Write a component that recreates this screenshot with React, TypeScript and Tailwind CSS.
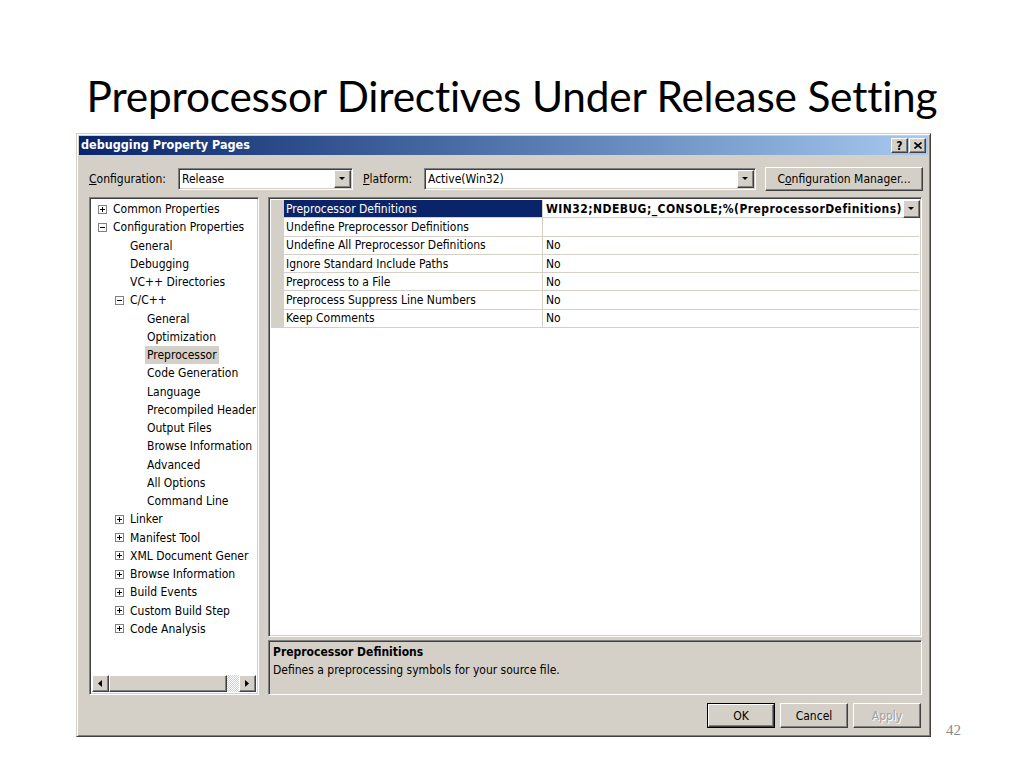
import React from 'react';

type TreeItem = { label: string; level: number; box?: '+' | '-'; selected?: boolean };

const tree: TreeItem[] = [
  { label: 'Common Properties', level: 0, box: '+' },
  { label: 'Configuration Properties', level: 0, box: '-' },
  { label: 'General', level: 1 },
  { label: 'Debugging', level: 1 },
  { label: 'VC++ Directories', level: 1 },
  { label: 'C/C++', level: 1, box: '-' },
  { label: 'General', level: 2 },
  { label: 'Optimization', level: 2 },
  { label: 'Preprocessor', level: 2, selected: true },
  { label: 'Code Generation', level: 2 },
  { label: 'Language', level: 2 },
  { label: 'Precompiled Header', level: 2 },
  { label: 'Output Files', level: 2 },
  { label: 'Browse Information', level: 2 },
  { label: 'Advanced', level: 2 },
  { label: 'All Options', level: 2 },
  { label: 'Command Line', level: 2 },
  { label: 'Linker', level: 1, box: '+' },
  { label: 'Manifest Tool', level: 1, box: '+' },
  { label: 'XML Document Gener', level: 1, box: '+' },
  { label: 'Browse Information', level: 1, box: '+' },
  { label: 'Build Events', level: 1, box: '+' },
  { label: 'Custom Build Step', level: 1, box: '+' },
  { label: 'Code Analysis', level: 1, box: '+' },
];

const props = [
  ['Preprocessor Definitions', 'WIN32;NDEBUG;_CONSOLE;%(PreprocessorDefinitions)'],
  ['Undefine Preprocessor Definitions', ''],
  ['Undefine All Preprocessor Definitions', 'No'],
  ['Ignore Standard Include Paths', 'No'],
  ['Preprocess to a File', 'No'],
  ['Preprocess Suppress Line Numbers', 'No'],
  ['Keep Comments', 'No'],
];

const ui = "font-['DejaVu_Sans_Condensed','DejaVu_Sans',sans-serif] font-stretch-condensed text-[12px] text-black";
const raised = 'border border-t-white border-l-white border-b-[#404040] border-r-[#404040] shadow-[inset_-1px_-1px_0_#808080] bg-[#d4d0c8]';
const sunken = 'border border-t-[#808080] border-l-[#808080] border-b-white border-r-white shadow-[inset_1px_1px_0_#404040,inset_-1px_-1px_0_#d4d0c8]';

function Arrow({ dir }: { dir: 'down' | 'left' | 'right' }) {
  const pts = dir === 'down' ? '0,0 6,0 3,3' : dir === 'left' ? '4,0 4,7 0,3.5' : '0,0 0,7 4,3.5';
  const w = dir === 'down' ? 7 : 5;
  const h = dir === 'down' ? 4 : 8;
  return (
    <svg width={w} height={h} viewBox={`0 0 ${w} ${h}`}>
      <polygon points={pts} fill="#000" />
    </svg>
  );
}

function DropBtn() {
  return (
    <div className={`${raised} w-[17px] h-[18px] flex items-center justify-center shrink-0`}>
      <Arrow dir="down" />
    </div>
  );
}

function Combo({ value, w }: { value: string; w: string }) {
  return (
    <div className={`${sunken} ${w} h-[22px] bg-white flex items-center pl-[3px] pr-[1px]`}>
      <span className="flex-1">{value}</span>
      <DropBtn />
    </div>
  );
}

function Box({ sign }: { sign: '+' | '-' }) {
  return (
    <svg width="9" height="9" viewBox="0 0 9 9" className="shrink-0">
      <rect x="0.5" y="0.5" width="8" height="8" fill="#fff" stroke="#808080" />
      <line x1="2" y1="4.5" x2="7" y2="4.5" stroke="#000" />
      {sign === '+' && <line x1="4.5" y1="2" x2="4.5" y2="7" stroke="#000" />}
    </svg>
  );
}

export default function App() {
  return (
    <div className="w-[1024px] h-[768px] bg-white flex flex-col overflow-hidden">
      <h1 className="font-['Lato',sans-serif] text-[42.4px] leading-none text-black text-center pt-[75px] h-[133px] tracking-[-0.2px]">
        Preprocessor Directives Under Release Setting
      </h1>

      <div className="flex items-end">
        <div className={`${ui} ml-[76px] w-[855px] h-[604px] bg-[#d4d0c8] border border-t-[#d4d0c8] border-l-[#d4d0c8] border-b-[#404040] border-r-[#404040] shadow-[inset_1px_1px_0_#fff,inset_-1px_-1px_0_#808080] p-[2px] flex flex-col`}>
          {/* title bar */}
          <div className="h-[19px] bg-gradient-to-r from-[#0a246a] to-[#a6caf0] flex items-center pl-[2px] pr-[2px]">
            <span className="flex-1 text-white font-bold text-[12.5px]">debugging Property Pages</span>
            <div className={`${raised} w-[17px] h-[15px] flex items-center justify-center font-bold text-[12px] leading-none`}>?</div>
            <div className={`${raised} w-[17px] h-[15px] ml-[1px] flex items-center justify-center`}>
              <svg width="8" height="7" viewBox="0 0 8 7">
                <path d="M0.5 0.5 L7.5 6.5 M7.5 0.5 L0.5 6.5" stroke="#000" strokeWidth="1.6" />
              </svg>
            </div>
          </div>

          {/* config row */}
          <div className="flex items-center h-[24px] mt-[12px] pl-[10px]">
            <span className="w-[89px]"><span className="underline">C</span>onfiguration:</span>
            <Combo value="Release" w="w-[175px]" />
            <span className="ml-[10px] w-[61px]"><span className="underline">P</span>latform:</span>
            <Combo value="Active(Win32)" w="w-[332px]" />
            <div className={`${raised} ml-[9px] w-[158px] h-[24px] flex items-center justify-center`}>
              C<span className="underline">o</span>nfiguration Manager...
            </div>
          </div>

          {/* main area */}
          <div className="flex mt-[6px] pl-[10px] h-[498px]">
            {/* tree */}
            <div className={`${sunken} w-[170px] h-full bg-white flex flex-col p-[2px]`}>
              <div className="flex-1 overflow-hidden">
                {tree.map((t, i) => (
                  <div key={i} className="h-[18.25px] flex items-center whitespace-nowrap" style={{ paddingLeft: 6 + t.level * 17 }}>
                    <div className="w-[15px] flex shrink-0">{t.box && <Box sign={t.box} />}</div>
                    <span className={t.selected ? 'bg-[#d4d0c8] px-[2px] -mx-[2px]' : ''}>{t.label}</span>
                  </div>
                ))}
              </div>
              <div className="h-[17px] flex">
                <div className={`${raised} w-[17px] h-full flex items-center justify-center`}><Arrow dir="left" /></div>
                <div className={`${raised} w-[118px] h-full`} />
                <div className="flex-1 h-full bg-[repeating-conic-gradient(#d4d0c8_0_25%,#fff_0_50%)] bg-[length:2px_2px]" />
                <div className={`${raised} w-[17px] h-full flex items-center justify-center`}><Arrow dir="right" /></div>
              </div>
            </div>

            {/* right column */}
            <div className="ml-[9px] w-[654px] flex flex-col">
              <div className={`${sunken} h-[440px] bg-white flex p-[2px]`}>
                <div className="w-[13px] bg-[#d4d0c8] h-[128px]" />
                <div className="flex-1 flex flex-col">
                  {props.map(([name, val], i) => (
                    <div key={i} className="h-[18.3px] flex border-b border-[#d4d0c8]">
                      <div className={`w-[259px] pl-[2px] flex items-center border-r border-[#d4d0c8] ${i === 0 ? 'bg-[#0a246a] text-white' : ''}`}>{name}</div>
                      <div className={`flex-1 flex items-center pl-[3px] ${i === 0 ? 'font-bold tracking-[0.45px]' : ''}`}>
                        <span className="flex-1 whitespace-nowrap overflow-hidden">{val}</span>
                        {i === 0 && <div className="-mr-[1px]"><DropBtn /></div>}
                      </div>
                    </div>
                  ))}
                </div>
              </div>
              <div className={`${sunken} mt-[3px] h-[55px] bg-[#d4d0c8] px-[4px] pt-[2px] leading-[18px]`}>
                <div className="font-bold">Preprocessor Definitions</div>
                <div>Defines a preprocessing symbols for your source file.</div>
              </div>
            </div>
          </div>

          {/* buttons */}
          <div className="flex justify-end gap-[5px] mt-[8px] pr-[7px]">
            <div className="border border-black">
              <div className={`${raised} w-[66px] h-[23px] flex items-center justify-center`}>OK</div>
            </div>
            <div className={`${raised} w-[68px] h-[25px] flex items-center justify-center`}>Cancel</div>
            <div className={`${raised} w-[68px] h-[25px] flex items-center justify-center text-[#a0a0a0] [text-shadow:1px_1px_0_#fff]`}>Apply</div>
          </div>
        </div>
        <span className="ml-[15px] mb-[-4px] font-['Liberation_Serif',serif] text-[15px] text-[#8a8a8a]">42</span>
      </div>
    </div>
  );
}
